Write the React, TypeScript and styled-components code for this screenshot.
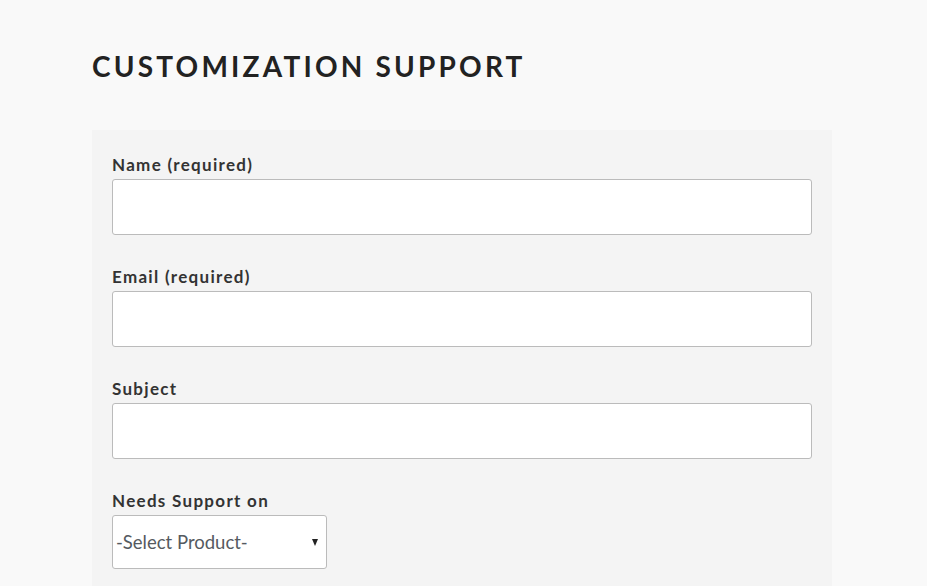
import React from "react";
import styled, { createGlobalStyle } from "styled-components";

const Global = createGlobalStyle`
  html, body { margin: 0; padding: 0; background: #f9f9f9; }
  body { font-family: "Lato", "Open Sans", sans-serif; color: #222; }
  * { box-sizing: border-box; }
`;

const Page = styled.div`
  padding: 46px 0 0 92px;
`;

const Title = styled.h1`
  margin: 0 0 44px;
  font-size: 28px;
  font-weight: 700;
  letter-spacing: 3.2px;
  line-height: 40px;
  color: #222;
`;

const Panel = styled.form`
  width: 740px;
  background: #f4f4f4;
  padding: 23px 20px 20px;
  display: flex;
  flex-direction: column;
  gap: 30px;
`;

const Field = styled.div`
  display: flex;
  flex-direction: column;
  gap: 2px;
`;

const Label = styled.label`
  font-size: 17px;
  font-weight: 700;
  letter-spacing: 1.3px;
  line-height: 24px;
  color: #333;
`;

const Input = styled.input`
  width: 700px;
  height: 56px;
  border: 1px solid #bbb;
  border-radius: 3px;
  background: #fff;
  font: inherit;
  outline: none;
`;

const SelectWrap = styled.div`
  position: relative;
  width: 215px;
  height: 54px;
`;

const Select = styled.select`
  appearance: none;
  width: 100%;
  height: 100%;
  border: 1px solid #bbb;
  border-radius: 3px;
  background: #fff;
  padding: 0 0 0 3px;
  font-family: "Lato", "Open Sans", sans-serif;
  font-size: 18.5px;
  color: #555a60;
  outline: none;
`;

const Arrow = styled.span`
  position: absolute;
  right: 9px;
  top: 24px;
  width: 0;
  height: 0;
  border-left: 3.5px solid transparent;
  border-right: 3.5px solid transparent;
  border-top: 7px solid #222;
  pointer-events: none;
`;

export default function App() {
  return (
    <>
      <Global />
      <Page>
        <Title>CUSTOMIZATION SUPPORT</Title>
        <Panel>
          <Field>
            <Label>Name (required)</Label>
            <Input type="text" />
          </Field>
          <Field>
            <Label>Email (required)</Label>
            <Input type="email" />
          </Field>
          <Field>
            <Label>Subject</Label>
            <Input type="text" />
          </Field>
          <Field>
            <Label>Needs Support on</Label>
            <SelectWrap>
              <Select defaultValue="">
                <option value="">-Select Product-</option>
              </Select>
              <Arrow />
            </SelectWrap>
          </Field>
        </Panel>
      </Page>
    </>
  );
}
